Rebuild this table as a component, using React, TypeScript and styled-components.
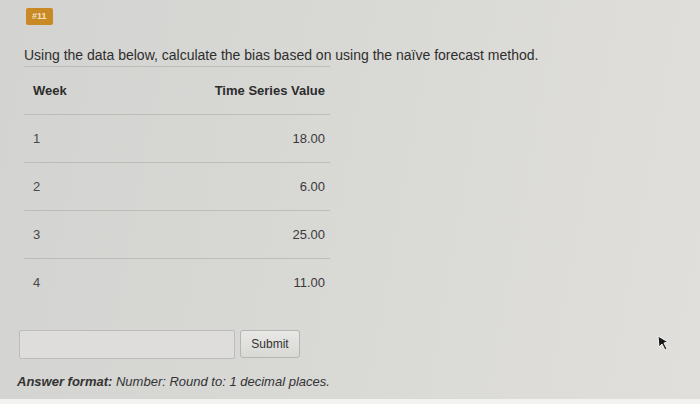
import React from "react";
import styled, { createGlobalStyle } from "styled-components";

const GlobalStyle = createGlobalStyle`
  html, body {
    margin: 0;
    padding: 0;
  }
  body {
    font-family: "Liberation Sans", Arial, sans-serif;
    color: #333;
  }
`;

// --- Layout ---
const Page = styled.div`
  position: relative;
  width: 700px;
  height: 404px;
  overflow: hidden;
  box-sizing: border-box;
  background: linear-gradient(100deg, #d3d3d1 0%, #d8d8d5 45%, #e0dfdb 100%);
  border-bottom: 5px solid #f2f2f0;
  padding: 8px 0 0 17px;
`;

const Badge = styled.div`
  width: fit-content;
  margin-left: 9px;
  padding: 3px 6px;
  background: #c98a26;
  color: #f3e2c2;
  font-size: 9px;
  font-weight: bold;
  border-radius: 2px;
  line-height: 11px;
`;

const Question = styled.p`
  margin: 22px 0 0 7px;
  font-size: 14px;
  line-height: 16px;
  color: #2e2e2e;
`;

const Table = styled.table`
  margin: 3px 0 0 7px;
  width: 306px;
  border-collapse: collapse;
  font-size: 13px;
  color: #3a3a3a;
`;

const Row = styled.tr`
  border-top: 1px solid #bdbdba;
  height: 48px;
`;

const WeekCell = styled.td<{ $head?: boolean }>`
  padding: 0 0 0 9px;
  vertical-align: middle;
  font-weight: ${(p) => (p.$head ? "bold" : "normal")};
  color: ${(p) => (p.$head ? "#2c2c2c" : "#484848")};
`;

const ValueCell = styled.td<{ $head?: boolean }>`
  padding: 0 5px 0 0;
  vertical-align: middle;
  text-align: right;
  font-weight: ${(p) => (p.$head ? "bold" : "normal")};
  color: ${(p) => (p.$head ? "#2c2c2c" : "#3a3a3a")};
`;

const AnswerRow = styled.div`
  display: flex;
  align-items: center;
  gap: 5px;
  margin: 23px 0 0 2px;
`;

const Input = styled.input`
  width: 216px;
  height: 29px;
  box-sizing: border-box;
  border: 1px solid #bcbcba;
  border-radius: 2px;
  background: #dedddb;
`;

const Button = styled.button`
  width: 60px;
  height: 28px;
  border: 1px solid #b5b5b2;
  border-radius: 3px;
  background: linear-gradient(#e8e8e6, #d8d8d5);
  font-family: "Liberation Sans", Arial, sans-serif;
  font-size: 12px;
  color: #333;
  padding: 0;
`;

const Format = styled.p`
  margin: 15px 0 0 0;
  font-size: 13px;
  font-style: italic;
  color: #333;
`;

const Cursor = styled.svg`
  position: absolute;
  left: 656px;
  top: 334px;
`;

const rows = [
  { week: 1, value: "18.00" },
  { week: 2, value: "6.00" },
  { week: 3, value: "25.00" },
  { week: 4, value: "11.00" },
];

export default function App() {
  return (
    <>
      <GlobalStyle />
      <Page>
        <Badge>#11</Badge>
        <Question>
          Using the data below, calculate the bias based on using the naïve
          forecast method.
        </Question>
        <Table>
          <tbody>
            <Row>
              <WeekCell $head>Week</WeekCell>
              <ValueCell $head>Time Series Value</ValueCell>
            </Row>
            {rows.map((r) => (
              <Row key={r.week}>
                <WeekCell>{r.week}</WeekCell>
                <ValueCell>{r.value}</ValueCell>
              </Row>
            ))}
          </tbody>
        </Table>
        <AnswerRow>
          <Input type="text" />
          <Button>Submit</Button>
        </AnswerRow>
        <Format>
          <b>Answer format:</b> Number: Round to: 1 decimal places.
        </Format>
        <Cursor width="16" height="18" viewBox="0 0 16 18">
          <path
            d="M2 2 L12 8 L8 9 L11 15 L9 16 L6 10 L3 13 Z"
            fill="#1a1a1a"
            stroke="#f4f4f4"
            strokeWidth="1"
          />
        </Cursor>
      </Page>
    </>
  );
}
